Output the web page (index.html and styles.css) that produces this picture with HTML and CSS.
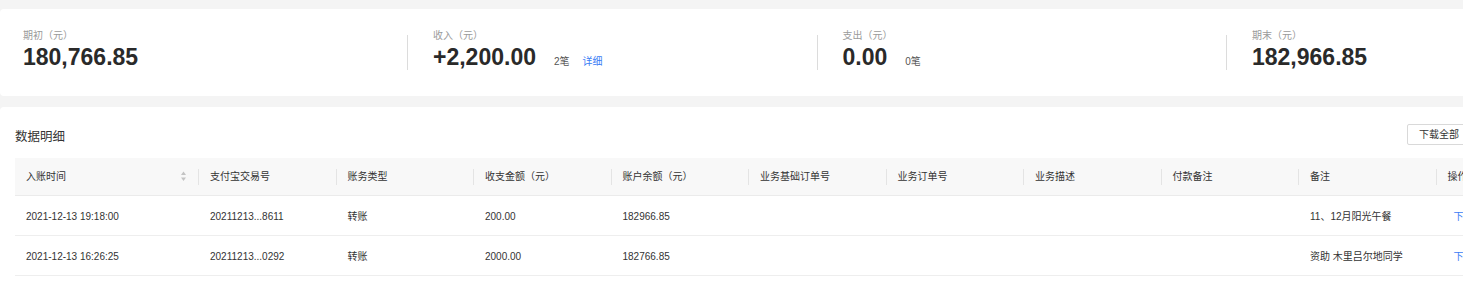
FILE: index.html
```html
<!DOCTYPE html>
<html lang="zh-CN">
<head>
<meta charset="utf-8">
<title>账单</title>
<link rel="stylesheet" href="styles.css">
</head>
<body>
<div class="page">
  <section class="summary">
    <div class="stat stat-first">
      <div class="stat-body">
        <div class="label">期初（元）</div>
        <div class="value-row"><span class="value">180,766.85</span></div>
      </div>
    </div>
    <div class="stat">
      <span class="divider"></span>
      <div class="stat-body">
        <div class="label">收入（元）</div>
        <div class="value-row"><span class="value">+2,200.00</span><span class="count">2笔</span><a class="detail">详细</a></div>
      </div>
    </div>
    <div class="stat">
      <span class="divider"></span>
      <div class="stat-body">
        <div class="label">支出（元）</div>
        <div class="value-row"><span class="value">0.00</span><span class="count">0笔</span></div>
      </div>
    </div>
    <div class="stat">
      <span class="divider"></span>
      <div class="stat-body">
        <div class="label">期末（元）</div>
        <div class="value-row"><span class="value">182,966.85</span></div>
      </div>
    </div>
  </section>

  <section class="table-card">
    <div class="toolbar">
      <h2 class="title">数据明细</h2>
      <button class="btn">下载全部</button>
    </div>
    <div class="table">
      <div class="thead">
        <div class="th">入账时间
          <svg class="sorter" width="5" height="11" viewBox="0 0 5 11"><polygon points="0,4 2.5,0.5 5,4" fill="#c4c4c4"/><polygon points="0,6.5 2.5,10 5,6.5" fill="#c4c4c4"/></svg>
        </div>
        <div class="th">支付宝交易号</div>
        <div class="th">账务类型</div>
        <div class="th">收支金额（元）</div>
        <div class="th">账户余额（元）</div>
        <div class="th">业务基础订单号</div>
        <div class="th">业务订单号</div>
        <div class="th">业务描述</div>
        <div class="th">付款备注</div>
        <div class="th">备注</div>
        <div class="th th-last">操作</div>
      </div>
      <div class="tr">
        <div class="td">2021-12-13 19:18:00</div>
        <div class="td">20211213...8611</div>
        <div class="td">转账</div>
        <div class="td">200.00</div>
        <div class="td">182966.85</div>
        <div class="td"></div>
        <div class="td"></div>
        <div class="td"></div>
        <div class="td"></div>
        <div class="td">11、12月阳光午餐</div>
        <div class="td"><a class="link">下载</a></div>
      </div>
      <div class="tr">
        <div class="td">2021-12-13 16:26:25</div>
        <div class="td">20211213...0292</div>
        <div class="td">转账</div>
        <div class="td">2000.00</div>
        <div class="td">182766.85</div>
        <div class="td"></div>
        <div class="td"></div>
        <div class="td"></div>
        <div class="td"></div>
        <div class="td">资助 木里吕尔地同学</div>
        <div class="td"><a class="link">下载</a></div>
      </div>
    </div>
  </section>
</div>
</body>
</html>
```

FILE: styles.css
```css
* { box-sizing: border-box; }

html, body {
  margin: 0;
  padding: 0;
}

body {
  background: #f4f4f4;
  overflow: hidden;
  font-family: "Liberation Sans", "Noto Sans CJK SC", sans-serif;
  color: #333;
}

.page {
  padding-top: 9px;
  width: 1700px;
}

/* summary */
.summary {
  width: 1640px;
  height: 87px;
  background: #fff;
  border-radius: 4px 0 0 4px;
  display: flex;
  align-items: flex-end;
  padding: 0 0 26px 0;
}

.stat {
  flex: none;
  width: 409.5px;
  display: flex;
  align-items: flex-end;
}

.stat-first {
  width: 407px;
  padding-left: 23px;
}

.divider {
  flex: none;
  width: 1px;
  height: 35px;
  background: #dcdcdc;
  margin-right: 25px;
}

.label {
  font-size: 10px;
  line-height: 14px;
  color: #9a9a9a;
  margin-bottom: 2px;
}

.value-row {
  display: flex;
  align-items: baseline;
}

.value {
  font-family: "Liberation Sans", sans-serif;
  font-weight: 700;
  font-size: 23px;
  line-height: 25px;
  color: #2a2a2a;
}

.count {
  font-size: 10px;
  color: #555;
  margin-left: 18px;
}

.detail {
  font-size: 10px;
  color: #3a7cf5;
  margin-left: 13px;
  cursor: pointer;
}

/* table card */
.table-card {
  margin-top: 11px;
  width: 1486px;
  min-height: 200px;
  background: #fff;
  border-radius: 4px 0 0 0;
  padding: 17px 15px 0 15px;
}

.toolbar {
  display: flex;
  justify-content: space-between;
  align-items: center;
  height: 21px;
}

.title {
  margin: 0;
  font-size: 12.5px;
  font-weight: 400;
  color: #333;
  line-height: 18px;
  padding-top: 4px;
}

.btn {
  height: 21px;
  padding: 0 11px;
  border: 1px solid #d9d9d9;
  border-radius: 2px;
  background: #fff;
  font-family: "Liberation Sans", "Noto Sans CJK SC", sans-serif;
  font-size: 10px;
  color: #333;
  line-height: 19px;
}

.table {
  margin-top: 13px;
  width: 1520px;
}

.thead,
.tr {
  display: grid;
  grid-template-columns: 184px repeat(9, 137.5px) 90px;
  align-items: center;
}

.thead {
  height: 38px;
  background: #f8f8f8;
  border-bottom: 1px solid #ebebeb;
}

.th {
  display: flex;
  align-items: center;
  height: 16px;
  line-height: 16px;
  padding-left: 11px;
  border-right: 1px solid #e4e4e4;
  font-size: 10px;
  color: #333;
  white-space: nowrap;
}

.th-last {
  border-right: none;
}

.sorter {
  margin-left: auto;
  margin-right: 12px;
}

.tr {
  height: 40px;
  border-bottom: 1px solid #eeeeee;
  padding-top: 2px;
}

.td {
  padding-left: 11px;
  font-size: 10px;
  line-height: 14px;
  color: #333;
  white-space: nowrap;
}

.link {
  color: #3a7cf5;
  margin-left: 6px;
  cursor: pointer;
}
```
